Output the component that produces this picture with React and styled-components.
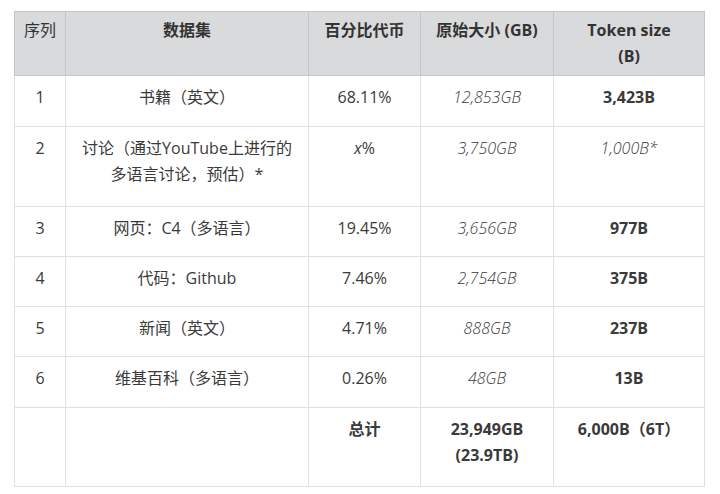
import React from "react";
import styled, { createGlobalStyle } from "styled-components";

const Global = createGlobalStyle`
  body {
    margin: 0;
    background: #ffffff;
    font-family: "Open Sans", "Noto Sans CJK SC", sans-serif;
    color: #3a3a3a;
  }
`;

const Page = styled.div`
  padding: 11px 0 0 14px;
`;

const Table = styled.table`
  border-collapse: collapse;
  table-layout: fixed;
  width: 690px;
  font-size: 16px;
  line-height: 26px;
`;

const Head = styled.th`
  background: #d9dadc;
  border: 1px solid #c4c5c7;
  color: #333;
  font-weight: ${(p) => (p.$plain ? 400 : 700)};
  text-align: center;
  vertical-align: top;
  padding: 5px 8px 0;
  height: 58px;
`;

const Row = styled.tr`
  height: ${(p) => p.$h}px;
`;

const Cell = styled.td`
  border: 1px solid #e0e0e0;
  text-align: center;
  vertical-align: top;
  padding: 8px 10px 0;
  font-weight: ${(p) => (p.$bold ? 700 : p.$italic ? 300 : 400)};
  font-style: ${(p) => (p.$italic ? "italic" : "normal")};
  color: #3a3a3a;
`;

const rows = [
  { n: "1", name: "书籍（英文）", pct: "68.11%", size: "12,853GB", tok: "3,423B", h: 51 },
  { n: "2", name: "讨论（通过YouTube上进行的多语言讨论，预估）*", pct: "x%", size: "3,750GB", tok: "1,000B*", tokItalic: true, pctItalic: true, h: 80 },
  { n: "3", name: "网页：C4（多语言）", pct: "19.45%", size: "3,656GB", tok: "977B", h: 50 },
  { n: "4", name: "代码：Github", pct: "7.46%", size: "2,754GB", tok: "375B", h: 50 },
  { n: "5", name: "新闻（英文）", pct: "4.71%", size: "888GB", tok: "237B", h: 50 },
  { n: "6", name: "维基百科（多语言）", pct: "0.26%", size: "48GB", tok: "13B", h: 51 },
];

const Pct = ({ r }) =>
  r.pctItalic ? (
    <>
      <i>x</i>%
    </>
  ) : (
    r.pct
  );

export default function App() {
  return (
    <Page>
      <Global />
      <Table>
        <colgroup>
          <col style={{ width: 51 }} />
          <col style={{ width: 243 }} />
          <col style={{ width: 112 }} />
          <col style={{ width: 133 }} />
          <col style={{ width: 151 }} />
        </colgroup>
        <thead>
          <tr>
            <Head $plain>序列</Head>
            <Head>数据集</Head>
            <Head>百分比代币</Head>
            <Head>原始大小 (GB)</Head>
            <Head>
              Token size
              <br />
              (B)
            </Head>
          </tr>
        </thead>
        <tbody>
          {rows.map((r) => (
            <Row key={r.n} $h={r.h}>
              <Cell>{r.n}</Cell>
              <Cell>{r.name}</Cell>
              <Cell>
                <Pct r={r} />
              </Cell>
              <Cell $italic>{r.size}</Cell>
              <Cell $bold={!r.tokItalic} $italic={r.tokItalic}>
                {r.tok}
              </Cell>
            </Row>
          ))}
          <Row $h={79}>
            <Cell />
            <Cell />
            <Cell $bold>总计</Cell>
            <Cell $bold>23,949GB (23.9TB)</Cell>
            <Cell $bold>6,000B（6T）</Cell>
          </Row>
        </tbody>
      </Table>
    </Page>
  );
}
